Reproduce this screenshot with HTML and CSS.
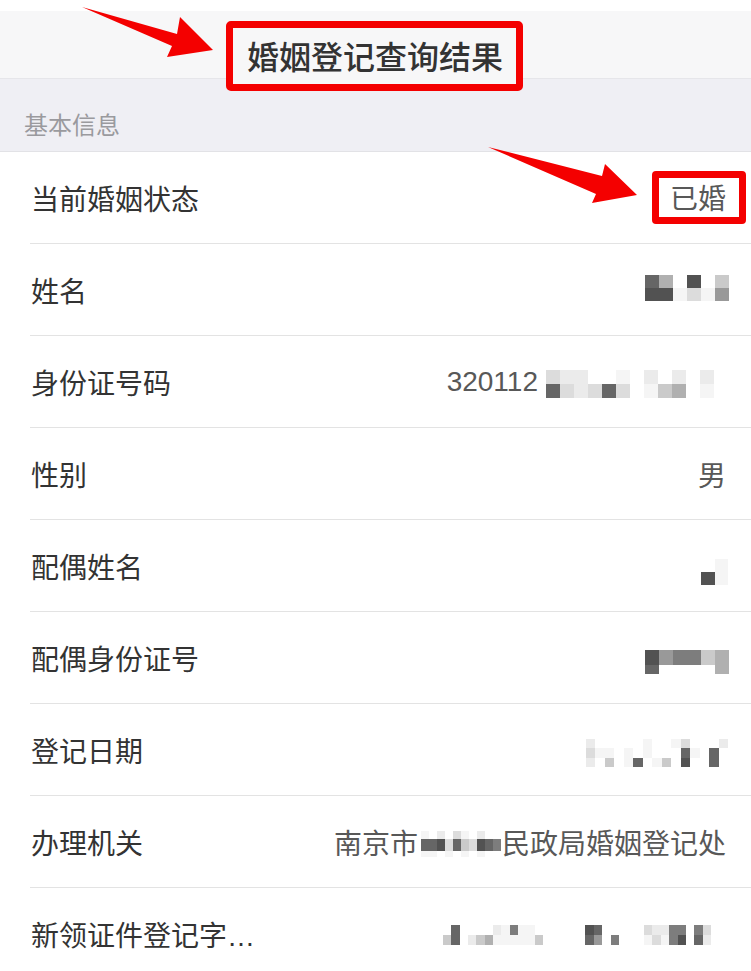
FILE: index.html
```html
<!DOCTYPE html>
<html lang="zh-CN">
<head>
<meta charset="utf-8">
<title>婚姻登记查询结果</title>
<link rel="stylesheet" href="styles.css">
</head>
<body>
<div class="page">
  <div class="topgap"></div>
  <header class="nav">
    <h1 class="title">婚姻登记查询结果</h1>
  </header>
  <div class="section">基本信息</div>
  <ul class="list">
    <li class="row"><span class="label">当前婚姻状态</span><span class="value"><span class="mark">已婚</span></span></li>
    <li class="row"><span class="label">姓名</span><span class="value">
      <span class="mosaic mz-name">
        <i class="k8"></i><i class="k5"></i><i class="k0"></i><i class="k9"></i><i class="k0"></i><i class="k4"></i>
        <i class="k9"></i><i class="k9"></i><i class="k1"></i><i class="k3"></i><i class="k1"></i><i class="k6"></i>
      </span></span></li>
    <li class="row"><span class="label">身份证号码</span><span class="value"><span class="digits">320112</span><span class="mosaic mz-id">
        <i class="k3"></i><i class="k2"></i><i class="k2"></i><i class="k0"></i><i class="k0"></i><i class="k1"></i><i class="k0"></i><i class="k2"></i><i class="k0"></i><i class="k2"></i><i class="k0"></i><i class="k2"></i><i class="k0"></i>
        <i class="k8"></i><i class="k3"></i><i class="k2"></i><i class="k3"></i><i class="k8"></i><i class="k3"></i><i class="k0"></i><i class="k1"></i><i class="k4"></i><i class="k5"></i><i class="k0"></i><i class="k1"></i><i class="k0"></i>
      </span></span></li>
    <li class="row"><span class="label">性别</span><span class="value">男</span></li>
    <li class="row"><span class="label">配偶姓名</span><span class="value">
      <span class="mosaic mz-spouse">
        <i class="k0"></i><i class="k1"></i>
        <i class="k9"></i><i class="k1"></i>
        <i class="k0"></i><i class="k0"></i>
      </span></span></li>
    <li class="row"><span class="label">配偶身份证号</span><span class="value">
      <span class="mosaic mz-sid">
        <i class="k9"></i><i class="k6"></i><i class="k7"></i><i class="k7"></i><i class="k4"></i><i class="k5"></i>
        <i class="k8"></i><i class="k0"></i><i class="k0"></i><i class="k0"></i><i class="k0"></i><i class="k5"></i>
      </span></span></li>
    <li class="row"><span class="label">登记日期</span><span class="value">
      <span class="mosaic mz-date">
        <i class="k2"></i><i class="k0"></i><i class="k0"></i><i class="k0"></i><i class="k0"></i><i class="k0"></i><i class="k1"></i><i class="k0"></i><i class="k0"></i><i class="k1"></i><i class="k3"></i><i class="k0"></i><i class="k0"></i><i class="k0"></i><i class="k2"></i>
        <i class="k3"></i><i class="k1"></i><i class="k1"></i><i class="k0"></i><i class="k1"></i><i class="k0"></i><i class="k1"></i><i class="k0"></i><i class="k0"></i><i class="k0"></i><i class="k8"></i><i class="k1"></i><i class="k0"></i><i class="k8"></i><i class="k0"></i>
        <i class="k2"></i><i class="k0"></i><i class="k4"></i><i class="k0"></i><i class="k1"></i><i class="k8"></i><i class="k0"></i><i class="k1"></i><i class="k4"></i><i class="k0"></i><i class="k9"></i><i class="k0"></i><i class="k0"></i><i class="k8"></i><i class="k0"></i>
      </span></span></li>
    <li class="row"><span class="label">办理机关</span><span class="value">南京市<span class="mosaic mz-office">
        <i class="k1"></i><i class="k0"></i><i class="k2"></i><i class="k0"></i><i class="k3"></i><i class="k1"></i><i class="k0"></i><i class="k2"></i><i class="k0"></i><i class="k0"></i>
        <i class="k8"></i><i class="k8"></i><i class="k9"></i><i class="k3"></i><i class="k8"></i><i class="k4"></i><i class="k3"></i><i class="k9"></i><i class="k8"></i><i class="k7"></i>
        <i class="k1"></i><i class="k1"></i><i class="k0"></i><i class="k1"></i><i class="k0"></i><i class="k1"></i><i class="k0"></i><i class="k1"></i><i class="k0"></i><i class="k0"></i>
      </span>民政局婚姻登记处</span></li>
    <li class="row"><span class="label">新领证件登记字<span class="ellipsis">…</span></span><span class="value">
      <span class="mosaic mz-cert">
        <i class="k0"></i><i class="k8"></i><i class="k0"></i><i class="k0"></i><i class="k0"></i><i class="k0"></i><i class="k2"></i><i class="k1"></i><i class="k7"></i><i class="k1"></i><i class="k1"></i><i class="k0"></i><i class="k0"></i><i class="k0"></i><i class="k0"></i><i class="k0"></i><i class="k0"></i><i class="k9"></i><i class="k8"></i><i class="k0"></i><i class="k0"></i><i class="k0"></i><i class="k0"></i><i class="k0"></i><i class="k3"></i><i class="k2"></i><i class="k2"></i><i class="k7"></i><i class="k7"></i><i class="k0"></i><i class="k7"></i><i class="k3"></i><i class="k0"></i><i class="k0"></i>
        <i class="k4"></i><i class="k8"></i><i class="k0"></i><i class="k2"></i><i class="k4"></i><i class="k5"></i><i class="k1"></i><i class="k1"></i><i class="k1"></i><i class="k1"></i><i class="k1"></i><i class="k4"></i><i class="k0"></i><i class="k0"></i><i class="k0"></i><i class="k0"></i><i class="k0"></i><i class="k8"></i><i class="k6"></i><i class="k0"></i><i class="k7"></i><i class="k0"></i><i class="k0"></i><i class="k0"></i><i class="k1"></i><i class="k3"></i><i class="k1"></i><i class="k7"></i><i class="k9"></i><i class="k0"></i><i class="k8"></i><i class="k2"></i><i class="k0"></i><i class="k0"></i>
      </span></span></li>
  </ul>

  <svg class="arrows" width="751" height="971" viewBox="0 0 751 971" aria-hidden="true">
    <polygon points="82,7 177,34 180,17 213,50 167,57 172,46" fill="#f40000"/>
    <polygon points="488,147 602,176 605,164 637,195 592,203 596,194" fill="#f40000"/>
  </svg>
</div>
</body>
</html>
```

FILE: styles.css
```css
* { box-sizing: border-box; }
html, body { margin: 0; padding: 0; background: #ffffff; }
body {
  font-family: "Noto Sans CJK SC", "Noto Sans", sans-serif;
  color: #333333;
}
.page {
  position: relative;
  width: 751px;
  height: 971px;
  overflow: hidden;
  background: #ffffff;
}
.topgap { height: 11px; background: #ffffff; }
.nav {
  height: 68px;
  background: #f7f7f8;
  border-bottom: 1px solid #e6e6ea;
  display: flex;
  justify-content: center;
  align-items: flex-start;
  padding-top: 10px;
}
.title {
  position: relative;
  z-index: 2;
  margin: 0 0 0 -2px;
  height: 70px;
  padding: 0 13px 0 14px;
  border: 7px solid #f40000;
  border-radius: 5px;
  background: #f7f7f8;
  font-size: 32px;
  font-weight: 500;
  line-height: 54px;
  color: #333333;
  white-space: nowrap;
}
.section {
  height: 73px;
  background: #efeff4;
  border-bottom: 1px solid #e2e2e6;
  padding: 16px 0 0 24px;
  display: flex;
  align-items: center;
  font-size: 24px;
  color: #9a9a9e;
}
.list { list-style: none; margin: 0; padding: 0; }
.row {
  height: 92px;
  margin-left: 30px;
  padding: 0 25px 0 1px;
  border-bottom: 1px solid #e3e3e3;
  display: flex;
  align-items: center;
  justify-content: space-between;
  font-size: 28px;
}
.label { color: #333333; white-space: nowrap; }
.ellipsis { font-family: "Liberation Sans", sans-serif; }
.value {
  color: #585858;
  display: flex;
  align-items: center;
  white-space: nowrap;
}
.digits { font-family: "Liberation Sans", "Noto Sans", sans-serif; font-size: 28px; }
.mark {
  display: inline-block;
  border: 7px solid #f40000;
  border-radius: 4px;
  padding: 0 13px 0 11px;
  margin-right: -20px;
  line-height: 39px;
  height: 53px;
  color: #585858;
}
.mosaic { display: grid; }
.mosaic i { display: block; }
.mz-name { grid-template-columns: repeat(6, 14px); grid-template-rows: 13px 13px; margin-right: -3px; margin-top: -4px; }
.mz-id { grid-template-columns: repeat(13, 14px); grid-template-rows: 14px 14px; margin-left: 8px; margin-right: -2px; margin-top: 4px; }
.mz-spouse { grid-template-columns: repeat(2, 13.5px); grid-template-rows: 13px 13px 13px; margin-right: -2px; margin-top: 26px; }
.mz-sid { grid-template-columns: repeat(6, 14px); grid-template-rows: 15px 9px; margin-right: -3px; margin-top: 8px; }
.mz-date { grid-template-columns: repeat(15, 9.5px); grid-template-rows: 9px 10px 9px; margin-right: -2px; margin-top: 6px; }
.mz-office { grid-template-columns: repeat(10, 8px); grid-template-rows: 8px 12px 6px; margin: 4px 1px 0 3px; }
.mz-cert { grid-template-columns: repeat(34, 8.4px); grid-template-rows: 10px 10px; margin-right: -2px; margin-top: 2px; }
.k0 { background: #ffffff; }
.k1 { background: #f5f5f5; }
.k2 { background: #ebebeb; }
.k3 { background: #dcdcdc; }
.k4 { background: #cacaca; }
.k5 { background: #b0b0b0; }
.k6 { background: #999999; }
.k7 { background: #7d7d7d; }
.k8 { background: #666666; }
.k9 { background: #525252; }
.arrows {
  position: absolute;
  left: 0;
  top: 0;
  pointer-events: none;
  z-index: 5;
}
```
